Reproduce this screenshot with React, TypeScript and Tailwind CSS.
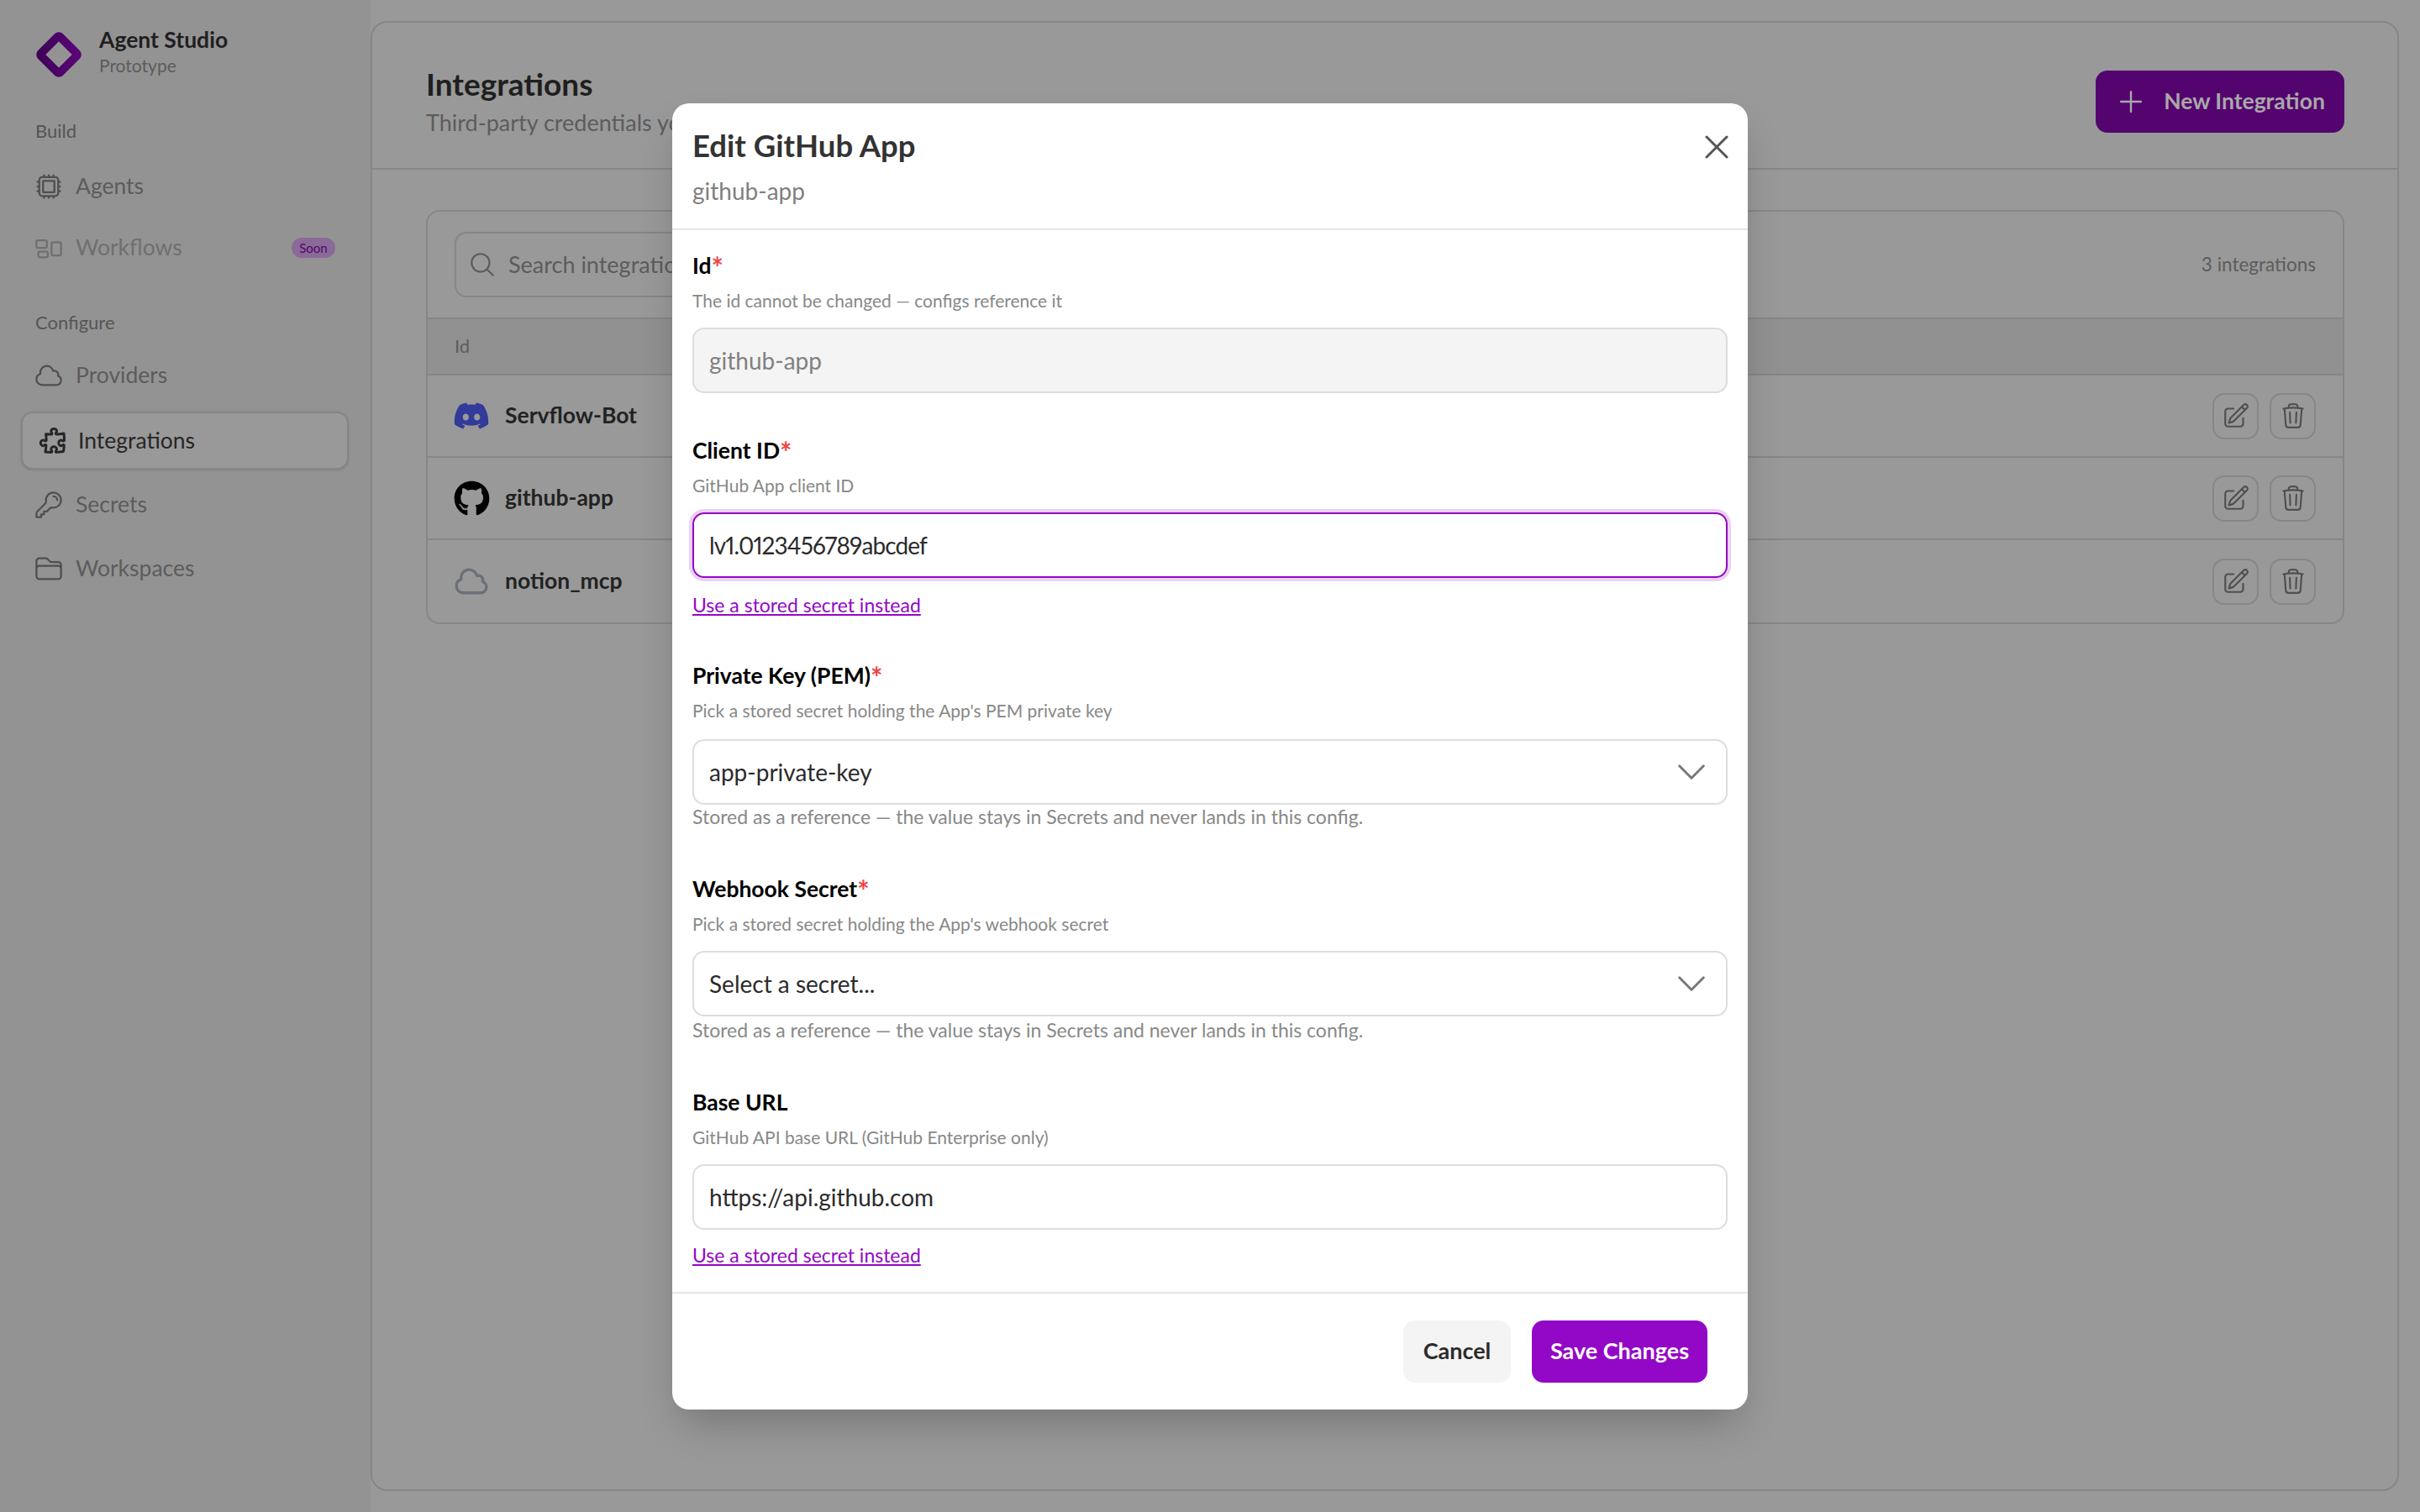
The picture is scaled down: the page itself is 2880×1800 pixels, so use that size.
import {
  HiOutlineChevronDown,
  HiOutlineCloud,
  HiOutlineCpuChip,
  HiOutlineFolder,
  HiOutlineKey,
  HiOutlineMagnifyingGlass,
  HiOutlinePencilSquare,
  HiOutlinePlus,
  HiOutlinePuzzlePiece,
  HiOutlineRectangleGroup,
  HiOutlineTrash,
  HiOutlineXMark,
} from 'react-icons/hi2'
import { FaDiscord, FaGithub } from 'react-icons/fa'

function Logo() {
  return (
    <svg width="56" height="56" viewBox="0 0 56 56" className="shrink-0">
      <defs>
        <linearGradient id="logo" x1="0" y1="1" x2="1" y2="0">
          <stop offset="0" stopColor="#3f0358" />
          <stop offset="1" stopColor="#5a0578" />
        </linearGradient>
      </defs>
      <rect x="12" y="12" width="32" height="32" rx="2" transform="rotate(45 28 28)" fill="none" stroke="url(#logo)" strokeWidth="10" />
    </svg>
  )
}

function NavItem({ icon, label, dim, soon }: { icon: React.ReactNode; label: string; dim?: boolean; soon?: boolean }) {
  return (
    <div className={`flex h-[40px] items-center gap-[18px] pl-[44px] pr-[42px] text-[26.5px] ${dim ? 'text-[#6f6f6f]' : 'text-[#5c5c5c]'}`}>
      <span className={`flex w-[28px] shrink-0 justify-center ${dim ? 'text-[#6f6f6f]' : 'text-[#4f4f4f]'}`}>{icon}</span>
      <span>{label}</span>
      {soon && (
        <span className="ml-auto flex h-[24px] w-[52px] items-center justify-center rounded-full bg-[#8a6a97] text-[15px] text-[#54046f]">
          Soon
        </span>
      )}
    </div>
  )
}

function Sidebar() {
  return (
    <aside className="flex w-[441px] shrink-0 flex-col bg-[#939393]">
      <div className="flex items-center gap-[20px] pl-[42px] pt-[36px]">
        <Logo />
        <div className="-mt-[5px]">
          <div className="h-[32px] text-[26.5px] font-bold leading-[32px] text-[#1f1f1f]">Agent Studio</div>
          <div className="h-[30px] text-[21px] leading-[30px] text-[#5c5c5c]">Prototype</div>
        </div>
      </div>
      <div className="mt-[47px] pl-[42px] text-[22px] leading-[32px] text-[#555]">Build</div>
      <div className="mt-[30px]"><NavItem icon={<HiOutlineCpuChip size={36} className="shrink-0" />} label="Agents" /></div>
      <div className="mt-[33px]"><NavItem icon={<HiOutlineRectangleGroup size={36} className="shrink-0" />} label="Workflows" dim soon /></div>
      <div className="mt-[53px] pl-[42px] text-[22px] leading-[32px] text-[#555]">Configure</div>
      <div className="mt-[27px]"><NavItem icon={<HiOutlineCloud size={36} className="shrink-0" />} label="Providers" /></div>
      <div className="ml-[25px] mt-[23px] flex h-[69px] w-[390px] items-center gap-[12px] rounded-[14px] border-2 border-[#858585] bg-[#999] pl-[18px] text-[26.5px] text-[#262626] shadow-sm">
        <HiOutlinePuzzlePiece size={36} strokeWidth={2} className="shrink-0" />
        <span>Integrations</span>
      </div>
      <div className="mt-[22px]"><NavItem icon={<HiOutlineKey size={36} className="shrink-0" />} label="Secrets" /></div>
      <div className="mt-[36px]"><NavItem icon={<HiOutlineFolder size={36} className="shrink-0" />} label="Workspaces" /></div>
    </aside>
  )
}

const rows = [
  { name: 'Servflow-Bot', icon: <FaDiscord size={44} className="shrink-0 text-[#323a9a]" /> },
  { name: 'github-app', icon: <FaGithub size={43} className="shrink-0 text-black" /> },
  { name: 'notion_mcp', icon: <HiOutlineCloud size={44} strokeWidth={1.8} className="shrink-0 text-[#6a7079]" /> },
]

function Main() {
  return (
    <main className="flex flex-1 flex-col pb-[25px] pr-[25px] pt-[25px]">
      <div className="flex flex-1 flex-col rounded-[20px] border-2 border-[#868686] bg-[#999]">
        <div className="flex h-[175px] items-center justify-between border-b-2 border-[#868686] pl-[64px] pr-[63px] pt-[14px]">
          <div className="-mt-[1px]">
            <div className="text-[37px] font-bold leading-[48px] text-[#1f1f1f]">Integrations</div>
            <div className="mt-[4px] text-[27px] leading-[36px] text-[#5c5c5c]">Third-party credentials your agents use</div>
          </div>
          <button className="flex h-[74px] w-[296px] items-center justify-center gap-[20px] rounded-[14px] bg-[#54046f] text-[26.5px] font-bold text-[#a8a8a8]">
            <HiOutlinePlus size={38} className="shrink-0" />
            New Integration
          </button>
        </div>
        <div className="pl-[64px] pr-[63px] pt-[48px]">
          <div className="overflow-hidden rounded-[16px] border-2 border-[#868686]">
            <div className="flex h-[128px] items-center justify-between border-b-2 border-[#868686] pl-[32px] pr-[32px]">
              <div className="flex h-[78px] w-[800px] items-center gap-[14px] rounded-[14px] border-2 border-[#868686] pl-[14px] text-[27px] text-[#5c5c5c]">
                <HiOutlineMagnifyingGlass size={34} className="shrink-0" />
                <span>Search integrations...</span>
              </div>
              <div className="text-[22.5px] text-[#5c5c5c]">3 integrations</div>
            </div>
            <div className="flex h-[67px] items-center border-b-2 border-[#868686] bg-[#919191] pb-[2px] pl-[32px] text-[22px] text-[#5c5c5c]">Id</div>
            {rows.map((r, i) => (
              <div key={r.name} className={`flex h-[98px] items-center pl-[32px] pr-[32px] ${i < 2 ? 'border-b-2 border-[#868686]' : ''}`}>
                <span className="flex w-[40px] shrink-0 justify-center">{r.icon}</span>
                <span className="ml-[20px] text-[26.5px] font-bold text-[#222]">{r.name}</span>
                <div className="ml-auto flex gap-[13px] text-[#4f4f4f]">
                  <button className="flex h-[55px] w-[55px] items-center justify-center rounded-[14px] border-2 border-[#868686]">
                    <HiOutlinePencilSquare size={34} />
                  </button>
                  <button className="flex h-[55px] w-[55px] items-center justify-center rounded-[14px] border-2 border-[#868686]">
                    <HiOutlineTrash size={34} />
                  </button>
                </div>
              </div>
            ))}
          </div>
        </div>
      </div>
    </main>
  )
}

function Head({ label, hint, required, low }: { label: string; hint: string; required?: boolean; low?: boolean }) {
  return (
    <div className={low ? 'mb-[18px]' : 'mb-[16px]'}>
      <div className="h-[40px] whitespace-nowrap text-[26.5px] font-bold leading-[40px] text-black">
        {label}
        {required && <span className="align-[-5px] text-[34px] leading-none text-[#ef4444]">*</span>}
      </div>
      <div className="mt-[6px] h-[32px] text-[21px] leading-[32px] text-[#888]">{hint}</div>
    </div>
  )
}

function StoredLink({ low }: { low?: boolean }) {
  return <div className={`h-[32px] text-[23px] leading-[32px] text-[#9308c6] underline ${low ? 'mt-[14px]' : 'mt-[16px]'}`}>Use a stored secret instead</div>
}

function Note({ tight }: { tight?: boolean }) {
  return <div className={`mb-[2px] h-[32px] text-[23px] leading-[32px] text-[#888] ${tight ? '-mt-[2px]' : ''}`}>Stored as a reference — the value stays in Secrets and never lands in this config.</div>
}

function Select({ value }: { value: string }) {
  return (
    <div className="flex h-[78px] items-center justify-between rounded-[14px] border-2 border-[#ddd] pl-[18px] pr-[18px] text-[28px] text-[#2b2b2b]">
      <span>{value}</span>
      <HiOutlineChevronDown size={46} className="text-[#777]" />
    </div>
  )
}

function Modal() {
  return (
    <div className="absolute inset-0 flex items-center justify-center">
      <div className="w-[1280px] rounded-[20px] bg-white shadow-2xl">
        <div className="relative h-[151px] border-b-2 border-[#e5e5ea] pl-[24px] pt-[26px]">
          <div className="h-[48px] text-[36.5px] font-bold leading-[48px] text-[#333]">Edit GitHub App</div>
          <div className="mt-[10px] text-[28px] leading-[40px] text-[#808080]">github-app</div>
          <HiOutlineXMark size={48} className="absolute right-[13px] top-[28px] text-[#555]" />
        </div>
        <div className="flex flex-col gap-[48px] pb-[28px] pl-[24px] pr-[24px] pt-[22px]">
          <div>
            <Head label="Id" hint="The id cannot be changed — configs reference it" required />
            <div className="flex h-[78px] items-center rounded-[14px] border-2 border-[#ddd] bg-[#f4f4f4] pl-[18px] text-[28px] text-[#808080]">github-app</div>
          </div>
          <div>
            <Head label="Client ID" hint="GitHub App client ID" required />
            <div className="flex h-[78px] items-center rounded-[14px] border-2 border-[#9308c6] pl-[18px] text-[28px] tracking-[-0.9px] text-[#2b2b2b] shadow-[0_0_0_4px_#ecd0f5] proportional-nums">lv1.0123456789abcdef</div>
            <StoredLink />
          </div>
          <div>
            <Head label="Private Key (PEM)" hint="Pick a stored secret holding the App's PEM private key" required low />
            <Select value="app-private-key" />
            <Note tight />
          </div>
          <div>
            <Head label="Webhook Secret" hint="Pick a stored secret holding the App's webhook secret" required />
            <Select value="Select a secret..." />
            <Note />
          </div>
          <div>
            <Head label="Base URL" hint="GitHub API base URL (GitHub Enterprise only)" />
            <div className="flex h-[78px] items-center rounded-[14px] border-2 border-[#ddd] pl-[18px] text-[28px] text-[#2b2b2b]">https://api.github.com</div>
            <StoredLink low />
          </div>
        </div>
        <div className="flex justify-end gap-[25px] border-t-2 border-[#e5e5ea] py-[32px] pr-[48px]">
          <button className="h-[74px] w-[128px] rounded-[14px] bg-[#f4f4f4] text-[27px] font-bold text-[#2b2b2b]">Cancel</button>
          <button className="h-[74px] w-[209px] rounded-[14px] bg-[#9308c6] text-[27px] font-bold text-white">Save Changes</button>
        </div>
      </div>
    </div>
  )
}

export default function App() {
  return (
    <div className="relative flex h-screen w-screen overflow-hidden bg-[#999] font-[Lato,sans-serif]">
      <Sidebar />
      <Main />
      <Modal />
    </div>
  )
}
